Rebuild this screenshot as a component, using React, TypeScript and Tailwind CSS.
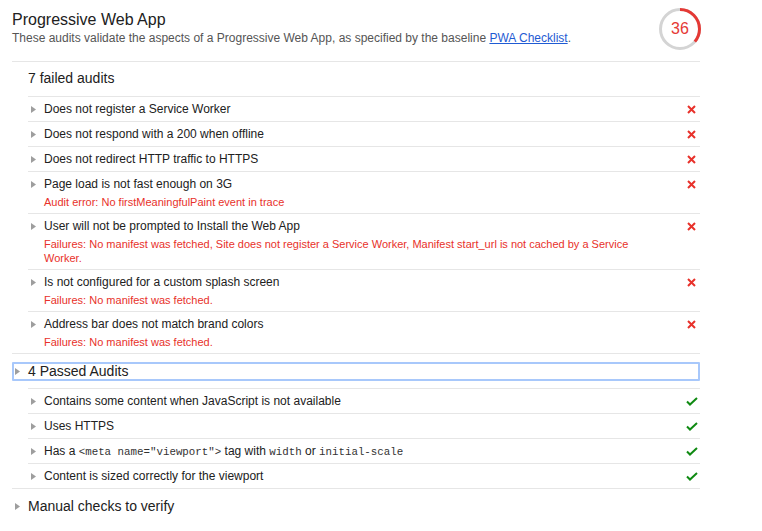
import React from 'react'

type Audit = {
  title: React.ReactNode
  error?: string
}

const failedAudits: Audit[] = [
  { title: 'Does not register a Service Worker' },
  { title: 'Does not respond with a 200 when offline' },
  { title: 'Does not redirect HTTP traffic to HTTPS' },
  { title: 'Page load is not fast enough on 3G', error: 'Audit error: No firstMeaningfulPaint event in trace' },
  {
    title: 'User will not be prompted to Install the Web App',
    error:
      'Failures: No manifest was fetched, Site does not register a Service Worker, Manifest start_url is not cached by a Service Worker.'
  },
  { title: 'Is not configured for a custom splash screen', error: 'Failures: No manifest was fetched.' },
  { title: 'Address bar does not match brand colors', error: 'Failures: No manifest was fetched.' }
]

const Code = ({ children }: { children: React.ReactNode }) => (
  <code className="font-['Liberation_Mono',monospace] text-[10.8px] leading-[10px] text-[#333]">{children}</code>
)

const passedAudits: Audit[] = [
  { title: 'Contains some content when JavaScript is not available' },
  { title: 'Uses HTTPS' },
  {
    title: (
      <>
        Has a <Code>{'<meta name="viewport">'}</Code> tag with <Code>width</Code> or <Code>initial-scale</Code>
      </>
    )
  },
  { title: 'Content is sized correctly for the viewport' }
]

function Triangle() {
  return (
    <svg width="5" height="7" viewBox="0 0 5 7">
      <polygon points="0,0 5,3.5 0,7" fill="#9e9e9e" />
    </svg>
  )
}

function FailIcon() {
  return (
    <svg width="9" height="9" viewBox="0 0 9 9">
      <path d="M1 1L8 8M8 1L1 8" stroke="#e8312a" strokeWidth="2" />
    </svg>
  )
}

function PassIcon() {
  return (
    <svg width="12" height="9" viewBox="0 0 12 9">
      <path d="M1 4.5L4 7.5L11 1" stroke="#0f8a12" strokeWidth="2" fill="none" />
    </svg>
  )
}

function Gauge({ score }: { score: number }) {
  const r = 19.5
  const c = 2 * Math.PI * r
  return (
    <div className="relative w-[42px] h-[42px] mt-[8px] mr-[-1px]">
      <svg width="42" height="42" viewBox="0 0 42 42" className="-rotate-90">
        <circle cx="21" cy="21" r={r} fill="none" stroke="#d4d4d4" strokeWidth="3" />
        <circle
          cx="21"
          cy="21"
          r={r}
          fill="none"
          stroke="#e53935"
          strokeWidth="3"
          strokeDasharray={`${(score / 100) * c} ${c}`}
        />
      </svg>
      <div className="absolute inset-0 flex items-center justify-center text-[16px] text-[#e53935] pb-[1px]">
        {score}
      </div>
    </div>
  )
}

function AuditRow({ audit, passed }: { audit: Audit; passed?: boolean }) {
  return (
    <div className={`flex border-t border-[#e6e6e6] pt-[5px] ${audit.error ? 'pb-[4px]' : 'pb-[5px]'}`}>
      <div className="w-[16px] h-[14px] pl-[3px] flex items-center flex-none">
        <Triangle />
      </div>
      <div className="flex-1 pr-[24px]">
        <div className="h-[14px] text-[12px] leading-[14px] text-[#212121]">{audit.title}</div>
        {audit.error && (
          <div className="mt-[4px] text-[11px] leading-[14px] text-[#e8312a]">{audit.error}</div>
        )}
      </div>
      <div className="w-[17px] h-[14px] flex items-center justify-center flex-none">
        {passed ? <PassIcon /> : <FailIcon />}
      </div>
    </div>
  )
}

export default function App() {
  return (
    <div className="w-full min-h-[531px] bg-white font-['Liberation_Sans',Arial,sans-serif]">
      <div className="ml-[12px] w-[688px]">
        {/* Header */}
        <div className="h-[62px] flex justify-between border-b border-[#e6e6e6]">
          <div>
            <h1 className="mt-[10px] text-[16px] leading-[20px] text-[#212121]">Progressive Web App</h1>
            <p className="text-[12px] leading-[16px] text-[#555]">
              These audits validate the aspects of a Progressive Web App, as specified by the baseline{' '}
              <a href="#" className="text-[#1f5bd3] underline">PWA Checklist</a>.
            </p>
          </div>
          <Gauge score={36} />
        </div>

        {/* Failed audits */}
        <div className="border-b border-[#e6e6e6]">
          <div className="h-[34px] flex items-center pl-[16px] pb-[1px] text-[14px] text-[#212121]">
            7 failed audits
          </div>
          <div className="ml-[16px]">
            {failedAudits.map((a, i) => (
              <AuditRow key={i} audit={a} />
            ))}
          </div>
        </div>

        {/* Passed audits */}
        <div className="pt-[8px] border-b border-[#e6e6e6]">
          <div className="h-[19px] flex items-center border-2 border-[#a8c8fb] rounded-[1px] text-[14px] text-[#212121]">
            <div className="w-[14px] pl-[1px] flex items-center flex-none">
              <Triangle />
            </div>
            <span>4 Passed Audits</span>
          </div>
          <div className="ml-[16px] mt-[7px]">
            {passedAudits.map((a, i) => (
              <AuditRow key={i} audit={a} passed />
            ))}
          </div>
        </div>

        {/* Manual checks */}
        <div className="h-[34px] flex items-center text-[14px] text-[#212121]">
          <div className="w-[16px] pl-[3px] flex items-center flex-none">
            <Triangle />
          </div>
          <span>Manual checks to verify</span>
        </div>
      </div>
    </div>
  )
}
